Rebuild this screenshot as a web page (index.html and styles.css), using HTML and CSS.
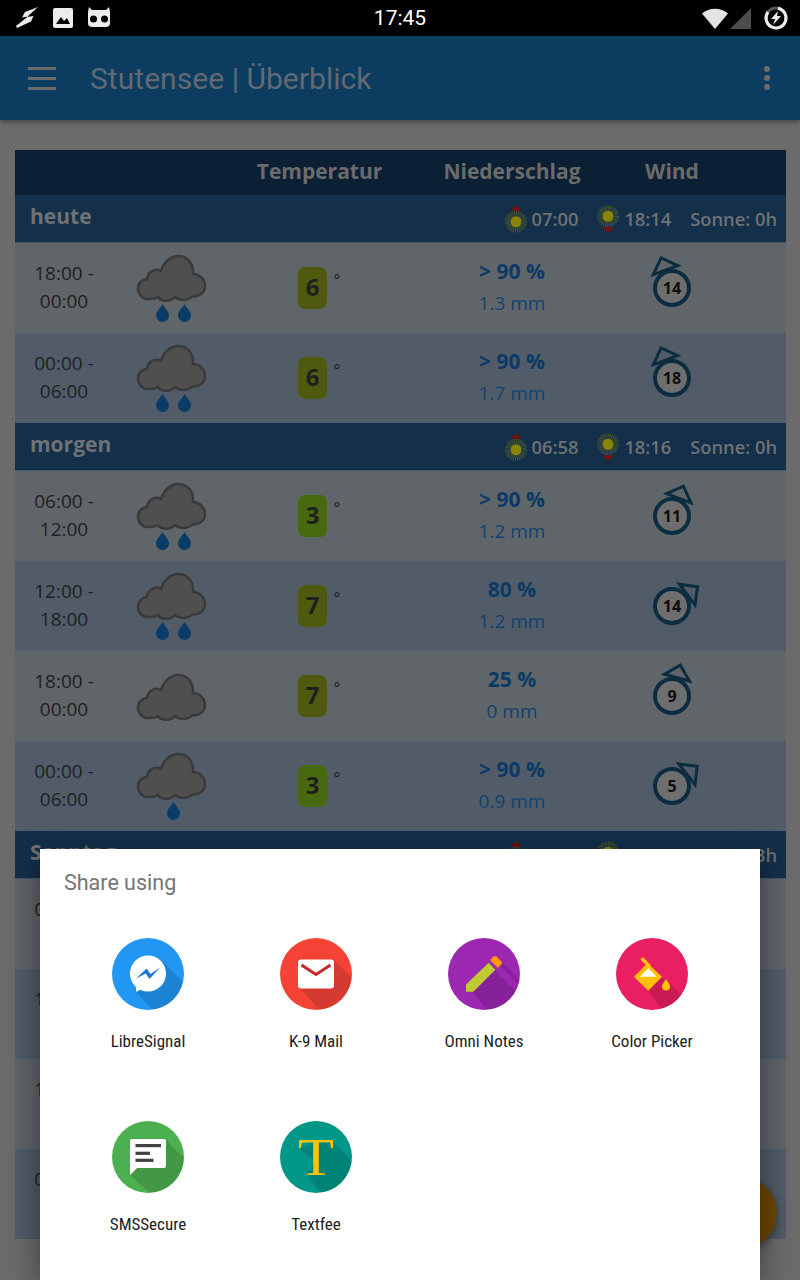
FILE: index.html
```html
<!DOCTYPE html>
<html lang="de">
<head>
    <meta charset="UTF-8">
    <meta name="viewport" content="width=device-width, initial-scale=1.0">
    <title>Stutensee | Überblick</title>
    <link rel="stylesheet" href="styles.css">
</head>
<body>
    <svg class="defs" aria-hidden="true">
        <symbol id="cloud" viewBox="0 0 72 48">
            <path class="cloud-shape" d="M12 45C6 45 2 40 2 34.500C2 29 6 25.500 11 25C12 17 20 14 25 17C28 7 36 2 42 2C51 2 58 9 57 20C63 20 69 25 69 32C69 39 63 43 56 42.500C52 47 44 47 39 43C35 48 25 48 22 43C19 45 15 45 12 45Z"/>
        </symbol>
        <symbol id="drop" viewBox="0 0 14 18">
            <path class="drop-shape" d="M7 0C9 4 13.500 7 13.500 11.500A6.500 6.500 0 0 1 0.500 11.500C0.500 7 5 4 7 0Z"/>
        </symbol>
        <symbol id="sun" viewBox="0 0 24 24">
            <circle class="sun-rays" cx="12" cy="12" r="9"/>
            <circle class="sun-core" cx="12" cy="12" r="6"/>
        </symbol>
        <clipPath id="disc"><circle cx="36" cy="36" r="36"/></clipPath>
    </svg>

    <div class="statusbar">
        <div class="status-left">
            <svg width="24" height="24" viewBox="0 0 24 24"><path class="st-white" d="M23 1L10 6L7 11.500L13 10.500L1 20L2 22L16 15.500L18.500 10L12 11Z"/></svg>
            <svg width="22" height="22" viewBox="0 0 22 22"><rect class="st-white" x="1" y="1" width="20" height="20" rx="2"/><path class="st-black" d="M4 17L9 10L12 14L15 11L18 17Z"/></svg>
            <svg width="24" height="22" viewBox="0 0 24 22"><path class="st-white" d="M2 0L5 3H19L22 0L23 5C23 8 23 15 23 16C23 19 21 20 18 20H6C3 20 1 19 1 16C1 15 1 8 1 5Z"/><circle class="st-black" cx="6.500" cy="12" r="3.500"/><circle class="st-black" cx="17.500" cy="12" r="3.500"/></svg>
        </div>
        <div class="clock">17:45</div>
        <div class="status-right">
            <svg width="26" height="22" viewBox="0 0 26 22"><path class="st-wifi" d="M0 6.500C7 0 19 0 26 6.500L13 22Z"/></svg>
            <svg class="signal" width="22" height="22" viewBox="0 0 22 22"><path class="st-signal" d="M21 1V22H0Z"/></svg>
            <svg width="26" height="26" viewBox="0 0 26 26"><circle class="st-battery-bg" cx="13" cy="13" r="10"/><path class="st-battery" d="M15 3.200A10 10 0 1 1 5 7"/><path class="st-white" d="M15 6L8 14H12L10 20L18 11H14Z"/></svg>
        </div>
    </div>

    <header class="appbar">
        <div class="burger"><span></span><span></span><span></span></div>
        <div class="appbar-title">Stutensee | Überblick</div>
        <div class="overflow"><span></span><span></span><span></span></div>
    </header>

    <main class="content">
        <div class="table">
            <div class="table-head">
                <div></div>
                <div></div>
                <div>Temperatur</div>
                <div>Niederschlag</div>
                <div>Wind</div>
            </div>

            <div class="day">
                <div class="day-name">heute</div>
                <div class="sun-times">
                    <span class="sun-time"><svg class="sun-icon" viewBox="0 0 24 30"><use href="#sun" y="6" width="24" height="24"/><path class="sun-arrow" d="M12 0L18 6H6Z"/></svg>07:00</span>
                    <span class="sun-time"><svg class="sun-icon" viewBox="0 0 24 30"><use href="#sun" width="24" height="24"/><path class="sun-arrow" d="M12 30L18 24H6Z"/></svg>18:14</span>
                    <span class="sun-hours">Sonne: 0h</span>
                </div>
            </div>
            <div class="row">
                <div class="time">18:00 -<br>00:00</div>
                <div class="sky"><svg class="sky-rain" viewBox="0 0 72 68"><use href="#cloud" width="72" height="48"/><use href="#drop" x="19.500" y="50" width="14" height="18"/><use href="#drop" x="41.500" y="50" width="14" height="18"/></svg></div>
                <div class="temp"><span class="chip chip-mild">6</span><span class="deg">°</span></div>
                <div class="rain"><b>&gt; 90 %</b><span>1.3 mm</span></div>
                <div class="wind"><svg class="wind-icon" viewBox="0 0 80 80"><path class="wind-arrow" d="M27 21L40 8L53 21Z" transform="rotate(-20 40 40)"/><circle class="wind-ring" cx="40" cy="40" r="17"/><text class="wind-num" x="40" y="46">14</text></svg></div>
            </div>
            <div class="row alt">
                <div class="time">00:00 -<br>06:00</div>
                <div class="sky"><svg class="sky-rain" viewBox="0 0 72 68"><use href="#cloud" width="72" height="48"/><use href="#drop" x="19.500" y="50" width="14" height="18"/><use href="#drop" x="41.500" y="50" width="14" height="18"/></svg></div>
                <div class="temp"><span class="chip chip-mild">6</span><span class="deg">°</span></div>
                <div class="rain"><b>&gt; 90 %</b><span>1.7 mm</span></div>
                <div class="wind"><svg class="wind-icon" viewBox="0 0 80 80"><path class="wind-arrow" d="M27 21L40 8L53 21Z" transform="rotate(-20 40 40)"/><circle class="wind-ring" cx="40" cy="40" r="17"/><text class="wind-num" x="40" y="46">18</text></svg></div>
            </div>

            <div class="day">
                <div class="day-name">morgen</div>
                <div class="sun-times">
                    <span class="sun-time"><svg class="sun-icon" viewBox="0 0 24 30"><use href="#sun" y="6" width="24" height="24"/><path class="sun-arrow" d="M12 0L18 6H6Z"/></svg>06:58</span>
                    <span class="sun-time"><svg class="sun-icon" viewBox="0 0 24 30"><use href="#sun" width="24" height="24"/><path class="sun-arrow" d="M12 30L18 24H6Z"/></svg>18:16</span>
                    <span class="sun-hours">Sonne: 0h</span>
                </div>
            </div>
            <div class="row">
                <div class="time">06:00 -<br>12:00</div>
                <div class="sky"><svg class="sky-rain" viewBox="0 0 72 68"><use href="#cloud" width="72" height="48"/><use href="#drop" x="19.500" y="50" width="14" height="18"/><use href="#drop" x="41.500" y="50" width="14" height="18"/></svg></div>
                <div class="temp"><span class="chip chip-cold">3</span><span class="deg">°</span></div>
                <div class="rain"><b>&gt; 90 %</b><span>1.2 mm</span></div>
                <div class="wind"><svg class="wind-icon" viewBox="0 0 80 80"><path class="wind-arrow" d="M27 21L40 8L53 21Z" transform="rotate(21 40 40)"/><circle class="wind-ring" cx="40" cy="40" r="17"/><text class="wind-num" x="40" y="46">11</text></svg></div>
            </div>
            <div class="row alt">
                <div class="time">12:00 -<br>18:00</div>
                <div class="sky"><svg class="sky-rain" viewBox="0 0 72 68"><use href="#cloud" width="72" height="48"/><use href="#drop" x="19.500" y="50" width="14" height="18"/><use href="#drop" x="41.500" y="50" width="14" height="18"/></svg></div>
                <div class="temp"><span class="chip chip-mild">7</span><span class="deg">°</span></div>
                <div class="rain"><b>80 %</b><span>1.2 mm</span></div>
                <div class="wind"><svg class="wind-icon" viewBox="0 0 80 80"><path class="wind-arrow" d="M27 21L40 8L53 21Z" transform="rotate(53 40 40)"/><circle class="wind-ring" cx="40" cy="40" r="17"/><text class="wind-num" x="40" y="46">14</text></svg></div>
            </div>
            <div class="row">
                <div class="time">18:00 -<br>00:00</div>
                <div class="sky"><svg class="sky-dry" viewBox="0 0 72 48"><use href="#cloud" width="72" height="48"/></svg></div>
                <div class="temp"><span class="chip chip-mild">7</span><span class="deg">°</span></div>
                <div class="rain"><b>25 %</b><span>0 mm</span></div>
                <div class="wind"><svg class="wind-icon" viewBox="0 0 80 80"><path class="wind-arrow" d="M27 21L40 8L53 21Z" transform="rotate(15 40 40)"/><circle class="wind-ring" cx="40" cy="40" r="17"/><text class="wind-num" x="40" y="46">9</text></svg></div>
            </div>
            <div class="row alt">
                <div class="time">00:00 -<br>06:00</div>
                <div class="sky"><svg class="sky-rain" viewBox="0 0 72 68"><use href="#cloud" width="72" height="48"/><use href="#drop" x="30.500" y="50" width="14" height="18"/></svg></div>
                <div class="temp"><span class="chip chip-cold">3</span><span class="deg">°</span></div>
                <div class="rain"><b>&gt; 90 %</b><span>0.9 mm</span></div>
                <div class="wind"><svg class="wind-icon" viewBox="0 0 80 80"><path class="wind-arrow" d="M27 21L40 8L53 21Z" transform="rotate(52 40 40)"/><circle class="wind-ring" cx="40" cy="40" r="17"/><text class="wind-num" x="40" y="46">5</text></svg></div>
            </div>

            <div class="day">
                <div class="day-name">Sonntag</div>
                <div class="sun-times">
                    <span class="sun-time"><svg class="sun-icon" viewBox="0 0 24 30"><use href="#sun" y="6" width="24" height="24"/><path class="sun-arrow" d="M12 0L18 6H6Z"/></svg>06:56</span>
                    <span class="sun-time"><svg class="sun-icon" viewBox="0 0 24 30"><use href="#sun" width="24" height="24"/><path class="sun-arrow" d="M12 30L18 24H6Z"/></svg>18:17</span>
                    <span class="sun-hours">Sonne: 3h</span>
                </div>
            </div>
            <div class="row"><div class="time">06:00 -<br>12:00</div></div>
            <div class="row alt"><div class="time">12:00 -<br>18:00</div></div>
            <div class="row"><div class="time">18:00 -<br>00:00</div></div>
            <div class="row alt"><div class="time">00:00 -<br>06:00</div></div>
        </div>
    </main>

    <div class="fab"></div>

    <div class="share-dialog">
        <div class="share-title">Share using</div>
        <div class="share-grid">
            <div class="share-item">
                <svg class="app-icon" viewBox="0 0 72 72">
                    <circle class="bg-blue" cx="36" cy="36" r="36"/>
                    <polygon class="long-shadow" clip-path="url(#disc)" points="49,22 92,65 62,95 24,54"/>
                    <circle class="fill-white" cx="36" cy="35.500" r="18"/>
                    <path class="fill-white" d="M24 45L24 54L32 50Z"/>
                    <path class="bolt-blue" d="M24 40.500L34.700 30.500L38.500 36L48 29.500L37.500 41L33.800 35.500Z"/>
                </svg>
                <div class="share-label">LibreSignal</div>
            </div>
            <div class="share-item">
                <svg class="app-icon" viewBox="0 0 72 72">
                    <circle class="bg-red" cx="36" cy="36" r="36"/>
                    <polygon class="long-shadow" clip-path="url(#disc)" points="53,21 92,60 60,95 19,49"/>
                    <rect class="fill-white" x="18" y="21.500" width="36" height="29" rx="3"/>
                    <path class="mail-fold" d="M21.500 27L36 36.500L50.500 27"/>
                </svg>
                <div class="share-label">K-9 Mail</div>
            </div>
            <div class="share-item">
                <svg class="app-icon" viewBox="0 0 72 72">
                    <circle class="bg-purple" cx="36" cy="36" r="36"/>
                    <polygon class="long-shadow" clip-path="url(#disc)" points="25,54 47,32 76,61 50,85"/>
                    <polygon class="long-shadow" clip-path="url(#disc)" points="52,28 55,25 80,50 77,53"/>
                    <path class="pencil-body" d="M18 46.500V53.700H25.300L47.300 31.700L40.700 24.700Z"/>
                    <path class="pencil-top" d="M42 22L45.500 18.500Q47 17.300 48.500 18.500L53.500 23.700Q54.700 25 53.500 26.300L49.700 29.700Z"/>
                </svg>
                <div class="share-label">Omni Notes</div>
            </div>
            <div class="share-item">
                <svg class="app-icon" viewBox="0 0 72 72">
                    <circle class="bg-pink" cx="36" cy="36" r="36"/>
                    <polygon class="long-shadow" clip-path="url(#disc)" points="46,39 52,44 85,75 60,90 32,53"/>
                    <path class="bucket-handle" d="M25.700 20.300L34 28.700"/>
                    <path class="bucket" d="M18 38.700L31.500 25.300L46 38.700L32.300 52.700Z"/>
                    <path class="fill-white" d="M24 38.700L32.300 30.300L40.700 38.700Z"/>
                    <path class="bucket" d="M50 41C52 44.500 54 46 54 48.500A4 4 0 0 1 46 48.500C46 46 48 44.500 50 41Z"/>
                </svg>
                <div class="share-label">Color Picker</div>
            </div>
            <div class="share-item">
                <svg class="app-icon" viewBox="0 0 72 72">
                    <circle class="bg-green" cx="36" cy="36" r="36"/>
                    <polygon class="long-shadow" clip-path="url(#disc)" points="53,18 92,57 60,92 18,54 26,46"/>
                    <path class="fill-white" d="M20 18H52Q54 18 54 20V45Q54 47 52 47H25L18 54V20Q18 18 20 18Z"/>
                    <rect class="sms-line" x="23.500" y="23" width="25.500" height="3.200"/>
                    <rect class="sms-line" x="23.500" y="30.700" width="14.500" height="3.200"/>
                    <rect class="sms-line" x="23.500" y="37.700" width="18" height="3.200"/>
                </svg>
                <div class="share-label">SMSSecure</div>
            </div>
            <div class="share-item">
                <svg class="app-icon" viewBox="0 0 72 72">
                    <circle class="bg-teal" cx="36" cy="36" r="36"/>
                    <polygon class="long-shadow" clip-path="url(#disc)" points="52,20 92,60 60,96 26,53 36,40 18,27"/>
                    <text class="logo-t" x="18" y="53.500" textLength="36" lengthAdjust="spacingAndGlyphs">T</text>
                </svg>
                <div class="share-label">Textfee</div>
            </div>
        </div>
    </div>
</body>
</html>
```

FILE: styles.css
```css
* {
    box-sizing: border-box;
}
body {
    margin: 0;
    width: 800px;
    height: 1280px;
    overflow: hidden;
    background: #6b6b6b;
    font-family: "Open Sans", sans-serif;
    position: relative;
}
.defs {
    position: absolute;
    width: 0;
    height: 0;
}

/* status bar */
.statusbar {
    height: 36px;
    background: #000;
    display: grid;
    grid-template-columns: 1fr auto 1fr;
    align-items: center;
}
.status-left {
    display: flex;
    align-items: center;
    gap: 13px;
    padding-left: 15px;
}
.status-right {
    display: flex;
    align-items: center;
    justify-content: flex-end;
    gap: 2px;
    padding-right: 11px;
}
.signal {
    margin-right: 9px;
}
.clock {
    color: #fff;
    font-family: Roboto, sans-serif;
    font-size: 21px;
}
.st-white { fill: #ececec; }
.st-black { fill: #000; }
.st-wifi { fill: #e4e4e4; }
.st-signal { fill: #4d4d4d; }
.st-battery-bg { fill: none; stroke: #555; stroke-width: 3; }
.st-battery { fill: none; stroke: #ececec; stroke-width: 3; }

/* app bar */
.appbar {
    height: 84px;
    background: #0d3c61;
    display: flex;
    align-items: center;
    padding: 0 30px 0 28px;
    box-shadow: 0 2px 5px rgba(0,0,0,0.35);
}
.burger {
    width: 28px;
    display: flex;
    flex-direction: column;
    gap: 7px;
}
.burger span {
    height: 3px;
    background: #6b6b6b;
}
.appbar-title {
    margin-left: 34px;
    flex: 1;
    color: #5f6a72;
    font-family: Roboto, sans-serif;
    font-size: 30.100px;
}
.overflow {
    display: flex;
    flex-direction: column;
    gap: 3px;
}
.overflow span {
    width: 6px;
    height: 6px;
    border-radius: 50%;
    background: #6b6b6b;
}

/* forecast table */
.content {
    padding: 30px 14px 0 15px;
}
.table-head,
.row {
    display: grid;
    grid-template-columns: 98px 118px 177px 208px 112px 58px;
    align-items: center;
    text-align: center;
}
.table-head {
    height: 45px;
    padding-bottom: 3px;
    background: #0c2035;
    color: #6b6b6b;
    font-size: 21px;
    font-weight: 700;
}
.day {
    height: 48px;
    background: #142f4a;
    border-bottom: 1px solid #475869;
    display: flex;
    align-items: center;
    justify-content: space-between;
    padding: 0 9px 0 15px;
    color: #6f7274;
}
.day-name {
    font-size: 21px;
    font-weight: 700;
    margin-top: -5px;
}
.sun-times {
    display: flex;
    align-items: center;
    font-size: 18.300px;
    font-weight: 600;
}
.sun-time {
    display: flex;
    align-items: center;
    margin-right: 19px;
}
.sun-icon {
    width: 22px;
    height: 28px;
    margin-right: 5px;
}
.sun-core { fill: #8a8400; }
.sun-rays { fill: none; stroke: #4a5a30; stroke-width: 6; stroke-dasharray: 1 1; }
.sun-arrow { fill: #7a1006; }

.row {
    height: 90px;
    background: #606569;
    color: #1f1f1f;
}
.row.alt {
    background: #515c68;
}
.time {
    font-size: 19px;
    line-height: 28px;
    margin-top: -2px;
}
.sky {
    display: flex;
    justify-content: center;
}
.sky-rain {
    width: 72px;
    height: 68px;
}
.sky-dry {
    width: 72px;
    height: 48px;
    margin-top: 2px;
}
.cloud-shape {
    fill: #4f4f4f;
    stroke: #3a3a3a;
    stroke-width: 2.500;
}
.drop-shape {
    fill: #0a3c68;
}
.temp {
    display: flex;
    justify-content: center;
    align-items: flex-start;
}
.chip {
    width: 29px;
    height: 42px;
    border-radius: 7px;
    font-size: 24px;
    font-weight: 700;
    line-height: 40px;
}
.chip-mild { background: #4f5a0e; }
.chip-cold { background: #48690f; }
.deg {
    width: 8px;
    margin-left: 6px;
    font-size: 16px;
    line-height: 26px;
}
.rain {
    display: flex;
    flex-direction: column;
    gap: 4px;
    color: #124270;
    font-size: 19px;
    line-height: 26px;
}
.rain b {
    color: #0b3a66;
    font-size: 21px;
    margin-top: -2px;
    margin-bottom: 2px;
}
.wind {
    display: flex;
    justify-content: center;
}
.wind-icon {
    width: 80px;
    height: 80px;
}
.wind-ring {
    fill: #6e6e6e;
    stroke: #0c2c40;
    stroke-width: 4;
}
.wind-arrow {
    fill: none;
    stroke: #0c2c40;
    stroke-width: 3;
}
.wind-num {
    font-size: 16px;
    font-weight: 700;
    fill: #0d0d0d;
    text-anchor: middle;
}

/* floating button behind the dialog */
.fab {
    position: absolute;
    left: 705px;
    top: 1177px;
    width: 72px;
    height: 72px;
    border-radius: 50%;
    background: #6b4600;
    box-shadow: 0 3px 8px rgba(0,0,0,0.4);
}

/* share dialog */
.share-dialog {
    position: absolute;
    left: 40px;
    top: 849px;
    width: 720px;
    height: 431px;
    background: #fff;
    padding: 0 24px;
    box-shadow: 0 8px 30px rgba(0,0,0,0.45);
}
.share-title {
    height: 68px;
    padding-top: 20px;
    color: #757575;
    font-family: Roboto, sans-serif;
    font-size: 21.500px;
    line-height: 28px;
}
.share-grid {
    display: grid;
    grid-template-columns: repeat(4, 168px);
    grid-auto-rows: 183px;
    padding-top: 21px;
}
.share-item {
    display: flex;
    flex-direction: column;
    align-items: center;
}
.app-icon {
    width: 72px;
    height: 72px;
}
.share-label {
    margin-top: 20px;
    color: #212121;
    font-family: Roboto, sans-serif;
    font-size: 17px;
    font-stretch: 75%;
    line-height: 22px;
}
.long-shadow { fill: rgba(0,0,0,0.13); }
.fill-white { fill: #fff; }
.bg-blue { fill: #2196f3; }
.bg-red { fill: #f44336; }
.bg-purple { fill: #9c27b0; }
.bg-pink { fill: #e91e63; }
.bg-green { fill: #4caf50; }
.bg-teal { fill: #009688; }
.bolt-blue { fill: #1976d2; }
.mail-fold { fill: none; stroke: #c62828; stroke-width: 3; }
.pencil-body { fill: #c0ca33; }
.pencil-top { fill: #ff9800; }
.bucket { fill: #ffc107; }
.bucket-handle { fill: none; stroke: #ffc107; stroke-width: 3.500; }
.sms-line { fill: #424242; }
.logo-t {
    fill: #ffc107;
    font-family: "Liberation Serif", serif;
    font-size: 53px;
}
```
